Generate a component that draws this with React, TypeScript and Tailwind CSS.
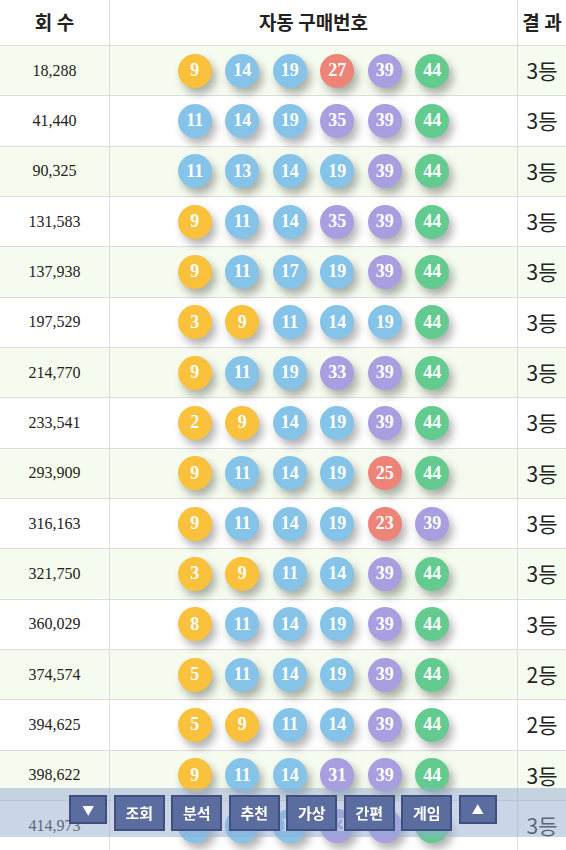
import React from "react";

type Row = { no: string; nums: number[]; rank: string };

const rows: Row[] = [
  { no: "18,288", nums: [9, 14, 19, 27, 39, 44], rank: "3등" },
  { no: "41,440", nums: [11, 14, 19, 35, 39, 44], rank: "3등" },
  { no: "90,325", nums: [11, 13, 14, 19, 39, 44], rank: "3등" },
  { no: "131,583", nums: [9, 11, 14, 35, 39, 44], rank: "3등" },
  { no: "137,938", nums: [9, 11, 17, 19, 39, 44], rank: "3등" },
  { no: "197,529", nums: [3, 9, 11, 14, 19, 44], rank: "3등" },
  { no: "214,770", nums: [9, 11, 19, 33, 39, 44], rank: "3등" },
  { no: "233,541", nums: [2, 9, 14, 19, 39, 44], rank: "3등" },
  { no: "293,909", nums: [9, 11, 14, 19, 25, 44], rank: "3등" },
  { no: "316,163", nums: [9, 11, 14, 19, 23, 39], rank: "3등" },
  { no: "321,750", nums: [3, 9, 11, 14, 39, 44], rank: "3등" },
  { no: "360,029", nums: [8, 11, 14, 19, 39, 44], rank: "3등" },
  { no: "374,574", nums: [5, 11, 14, 19, 39, 44], rank: "2등" },
  { no: "394,625", nums: [5, 9, 11, 14, 39, 44], rank: "2등" },
  { no: "398,622", nums: [9, 11, 14, 31, 39, 44], rank: "3등" },
  { no: "414,973", nums: [11, 14, 19, 33, 39, 44], rank: "3등" },
];

function ballColor(n: number): string {
  if (n <= 10) return "bg-[#f9c13c]";
  if (n <= 20) return "bg-[#85c3e9]";
  if (n <= 30) return "bg-[#ee8477]";
  if (n <= 40) return "bg-[#a89ee0]";
  return "bg-[#63ca90]";
}

function Ball({ n }: { n: number }) {
  return (
    <span
      className={`flex h-[34px] w-[34px] items-center justify-center rounded-full ${ballColor(n)} font-['Liberation_Serif',serif] text-[18px] font-bold text-white shadow-[4px_6px_9px_rgba(0,0,0,0.3)]`}
    >
      {n}
    </span>
  );
}

const btn =
  "flex h-[36px] w-[51px] items-center justify-center border-2 border-[#3f4f80] bg-[#5b6d9f] text-[15px] font-bold text-white";
const arrow =
  "flex h-[29px] w-[38px] items-center justify-center border-2 border-[#3f4f80] bg-[#5b6d9f] text-[12px] text-white";

export default function App() {
  return (
    <div className="relative w-[566px] bg-white font-['Noto_Sans_CJK_KR',sans-serif] text-[#222]">
      <div className="flex h-[46px] border-b border-[#dddddd] text-[19px] font-bold">
        <div className="flex w-[110px] items-center justify-center border-r border-[#dddddd]">회 수</div>
        <div className="flex w-[408px] items-center justify-center border-r border-[#dddddd]">자동 구매번호</div>
        <div className="flex flex-1 items-center justify-center">결 과</div>
      </div>
      {rows.map((r, i) => (
        <div
          key={r.no}
          className={`flex h-[50.33px] border-b border-[#dddddd] ${i % 2 === 0 ? "bg-[#f5fbef]" : "bg-white"}`}
        >
          <div className="flex w-[110px] items-center justify-center border-r border-[#dddddd] font-['Liberation_Serif',serif] text-[16px]">
            {r.no}
          </div>
          <div className="flex w-[408px] items-center justify-center gap-[13.5px] border-r border-[#dddddd]">
            {r.nums.map((n, j) => (
              <Ball key={j} n={n} />
            ))}
          </div>
          <div className="flex flex-1 items-center justify-center text-[21px]">{r.rank}</div>
        </div>
      ))}

      {/* bottom menu floats over the table */}
      <div className="fixed bottom-[13px] left-0 right-0 flex h-[49px] items-start justify-center gap-[6.5px] bg-[rgba(150,172,210,0.5)] pt-[7px] font-['Noto_Sans_CJK_KR',sans-serif]">
        <button type="button" className={arrow}>▼</button>
        <button type="button" className={btn}>조회</button>
        <button type="button" className={btn}>분석</button>
        <button type="button" className={btn}>추천</button>
        <button type="button" className={btn}>가상</button>
        <button type="button" className={btn}>간편</button>
        <button type="button" className={btn}>게임</button>
        <button type="button" className={arrow}>▲</button>
      </div>
    </div>
  );
}
